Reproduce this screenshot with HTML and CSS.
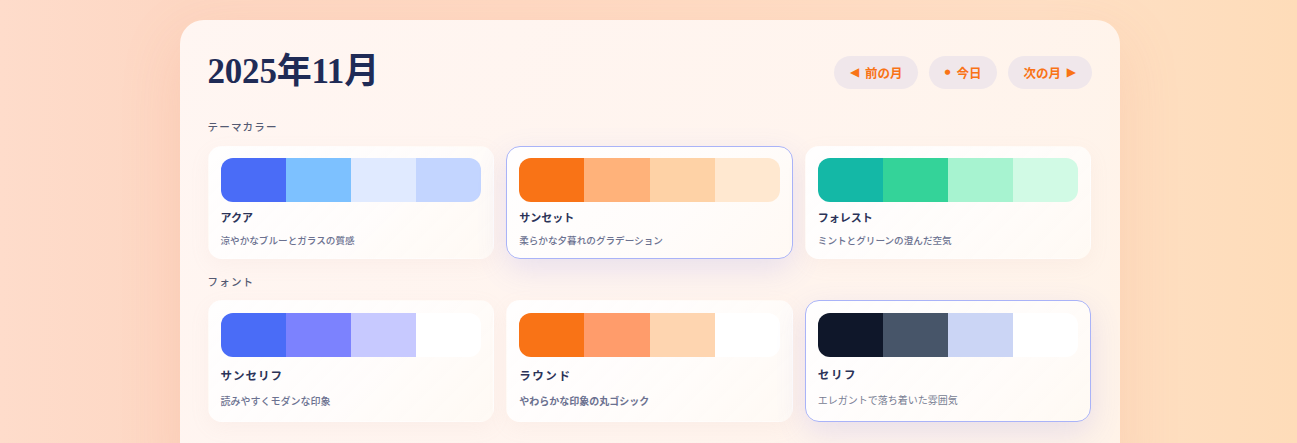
FILE: index.html
```html
<!DOCTYPE html>
<html lang="ja">
<head>
<meta charset="utf-8">
<title>2025年11月</title>
<link rel="stylesheet" href="styles.css">
</head>
<body>
<div class="panel">
  <header class="header">
    <h1 class="title">2025年11月</h1>
    <nav class="nav">
      <button class="pill"><span class="glyph">◀</span> 前の月</button>
      <button class="pill"><span class="glyph dot">●</span> 今日</button>
      <button class="pill">次の月 <span class="glyph">▶</span></button>
    </nav>
  </header>

  <section class="section">
    <h2 class="label">テーマカラー</h2>
    <div class="grid">
      <div class="card">
        <div class="swatch">
          <span class="aqua-1"></span><span class="aqua-2"></span><span class="aqua-3"></span><span class="aqua-4"></span>
        </div>
        <div class="name">アクア</div>
        <div class="desc">涼やかなブルーとガラスの質感</div>
      </div>
      <div class="card selected">
        <div class="swatch">
          <span class="sun-1"></span><span class="sun-2"></span><span class="sun-3"></span><span class="sun-4"></span>
        </div>
        <div class="name">サンセット</div>
        <div class="desc">柔らかな夕暮れのグラデーション</div>
      </div>
      <div class="card">
        <div class="swatch">
          <span class="forest-1"></span><span class="forest-2"></span><span class="forest-3"></span><span class="forest-4"></span>
        </div>
        <div class="name">フォレスト</div>
        <div class="desc">ミントとグリーンの澄んだ空気</div>
      </div>
    </div>
  </section>

  <section class="section section-font">
    <h2 class="label">フォント</h2>
    <div class="grid">
      <div class="card font-card">
        <div class="swatch">
          <span class="sans-1"></span><span class="sans-2"></span><span class="sans-3"></span><span class="blank"></span>
        </div>
        <div class="name sans-name">サンセリフ</div>
        <div class="desc sans-desc">読みやすくモダンな印象</div>
      </div>
      <div class="card font-card">
        <div class="swatch">
          <span class="round-1"></span><span class="round-2"></span><span class="round-3"></span><span class="blank"></span>
        </div>
        <div class="name round-name">ラウンド</div>
        <div class="desc round-desc">やわらかな印象の丸ゴシック</div>
      </div>
      <div class="card font-card selected">
        <div class="swatch">
          <span class="serif-1"></span><span class="serif-2"></span><span class="serif-3"></span><span class="blank"></span>
        </div>
        <div class="name serif-name">セリフ</div>
        <div class="desc serif-desc">エレガントで落ち着いた雰囲気</div>
      </div>
    </div>
  </section>
</div>
</body>
</html>
```

FILE: styles.css
```css
* { box-sizing: border-box; }

html, body {
  margin: 0;
  height: 100%;
}

body {
  padding-left: 2px;
  background: linear-gradient(90deg, #fedccb 0%, #fdd7c3 14%, #fed9c3 40%, #fee0c6 80%, #fedcb9 100%);
  font-family: "Noto Sans CJK JP", "Noto Sans", sans-serif;
  overflow: hidden;
}

.panel {
  width: 940px;
  margin: 20px auto 0;
  padding: 34px 28px 40px;
  border-radius: 24px 24px 0 0;
  background: linear-gradient(120deg, rgba(255, 247, 244, 0.96) 0%, rgba(255, 246, 241, 0.93) 60%, rgba(255, 245, 236, 0.9) 100%);
  box-shadow: 0 20px 60px rgba(240, 140, 100, 0.18);
  min-height: 460px;
}

.header {
  display: flex;
  align-items: center;
  justify-content: space-between;
  height: 36px;
}

.title {
  margin: 0;
  font-family: "Liberation Serif", "Noto Sans CJK JP", serif;
  font-weight: 700;
  font-size: 35px;
  line-height: 36px;
  color: #1f2b56;
  letter-spacing: -0.2px;
}

.nav {
  display: flex;
  gap: 11px;
}

.pill {
  height: 33px;
  padding: 0 15.5px;
  border: none;
  border-radius: 17px;
  background: #f0e7eb;
  color: #f97316;
  font-family: "Noto Sans CJK JP", sans-serif;
  font-weight: 700;
  font-size: 12.5px;
  display: flex;
  align-items: center;
  gap: 3px;
  white-space: pre;
}

.glyph {
  font-family: "DejaVu Sans", sans-serif;
  font-size: 12px;
}

.glyph.dot {
  font-size: 7px;
}

.section {
  margin-top: 29px;
}

.section-font {
  margin-top: 15px;
}

.label {
  margin: 0 0 11px;
  font-size: 10.5px;
  line-height: 16px;
  font-weight: 500;
  letter-spacing: 1.2px;
  color: #545a72;
}

.section-font .label {
  margin-bottom: 10px;
}

.grid {
  display: grid;
  grid-template-columns: repeat(3, 1fr);
  gap: 12px;
}

.card {
  border: 1px solid transparent;
  border-radius: 14px;
  padding: 11px 12px 11px;
  background: linear-gradient(135deg, rgba(255, 255, 255, 0.95) 0%, rgba(255, 253, 252, 0.9) 60%, rgba(255, 250, 245, 0.88) 100%);
  box-shadow: 0 6px 20px rgba(200, 160, 170, 0.08);
}

.card.selected {
  border-color: #a9b3f8;
  box-shadow: 0 10px 30px rgba(110, 110, 230, 0.16);
}

.swatch {
  display: flex;
  height: 44px;
  border-radius: 12px;
  overflow: hidden;
}

.swatch span {
  flex: 1;
}

.aqua-1 { background: #4a6cf7; }
.aqua-2 { background: #7dc1ff; }
.aqua-3 { background: #e0eaff; }
.aqua-4 { background: #c3d5ff; }

.sun-1 { background: #f97316; }
.sun-2 { background: #ffb27a; }
.sun-3 { background: #fed2a6; }
.sun-4 { background: #ffe8d0; }

.forest-1 { background: #14b8a6; }
.forest-2 { background: #34d399; }
.forest-3 { background: #a7f3d0; }
.forest-4 { background: #d1fae5; }

.sans-1 { background: #4a6cf7; }
.sans-2 { background: #7c82fe; }
.sans-3 { background: #c7c9ff; }

.round-1 { background: #f97316; }
.round-2 { background: #ff9c6b; }
.round-3 { background: #fed5b0; }

.serif-1 { background: #0f172a; }
.serif-2 { background: #475569; }
.serif-3 { background: #cbd5f5; }

.blank { background: #ffffff; }

.name {
  margin-top: 7px;
  font-size: 11px;
  line-height: 16px;
  font-weight: 700;
  color: #2b3358;
}

.desc {
  margin-top: 8px;
  font-size: 9.6px;
  line-height: 14px;
  font-weight: 500;
  color: #6b7190;
}

.font-card {
  padding-top: 12px;
  padding-bottom: 13px;
}

.font-card .name {
  margin-top: 9px;
  line-height: 18px;
}

.font-card .desc {
  margin-top: 10px;
  font-size: 10px;
}

.sans-name {
  font-size: 11.5px;
  letter-spacing: 1px;
}

.round-name {
  font-size: 11.5px;
  letter-spacing: 1.6px;
}

.round-desc {
  font-weight: 700;
}

.serif-name {
  font-family: "Liberation Serif", "Noto Sans CJK JP", serif;
  font-size: 11.5px;
  letter-spacing: 1.6px;
}

.serif-desc {
  font-family: "Liberation Serif", "Noto Sans CJK JP", serif;
  font-weight: 400;
  color: #777c92;
}
```
